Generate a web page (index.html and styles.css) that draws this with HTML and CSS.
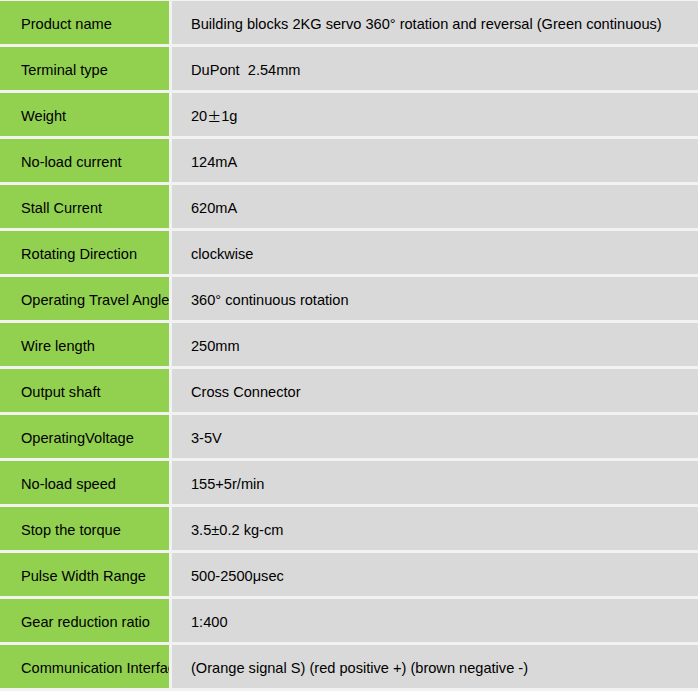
FILE: index.html
```html
<!DOCTYPE html>
<html>
<head>
<meta charset="utf-8">
<link rel="stylesheet" href="styles.css">
</head>
<body>
<div class="spec">
  <div class="k">Product name</div><div class="v">Building blocks 2KG servo 360° rotation and reversal (Green continuous)</div>
  <div class="k">Terminal type</div><div class="v">DuPont&nbsp; 2.54mm</div>
  <div class="k">Weight</div><div class="v">20<span class="cjk">±</span>1g</div>
  <div class="k">No-load current</div><div class="v">124mA</div>
  <div class="k">Stall Current</div><div class="v">620mA</div>
  <div class="k">Rotating Direction</div><div class="v">clockwise</div>
  <div class="k">Operating Travel Angle</div><div class="v">360° continuous rotation</div>
  <div class="k">Wire length</div><div class="v">250mm</div>
  <div class="k">Output shaft</div><div class="v">Cross Connector</div>
  <div class="k">OperatingVoltage</div><div class="v">3-5V</div>
  <div class="k">No-load speed</div><div class="v">155+5r/min</div>
  <div class="k">Stop the torque</div><div class="v">3.5±0.2 kg-cm</div>
  <div class="k">Pulse Width Range</div><div class="v">500-2500μsec</div>
  <div class="k">Gear reduction ratio</div><div class="v">1:400</div>
  <div class="k">Communication Interface</div><div class="v">(Orange signal S) (red positive +) (brown negative -)</div>
</div>
</body>
</html>
```
FILE: styles.css
```css
html, body {
  margin: 0;
  padding: 0;
  background: #f2f2f2;
}
.spec {
  display: grid;
  grid-template-columns: 169px 526px;
  grid-auto-rows: 43px;
  gap: 3px;
  padding: 1px 0 0 0;
  font-family: "Liberation Sans", Arial, sans-serif;
  font-size: 14.6px;
  color: #000;
}
.k, .v {
  display: flex;
  align-items: center;
  white-space: nowrap;
  overflow: hidden;
  padding-top: 2px;
  box-sizing: border-box;
}
.k {
  background: #92d050;
  padding-left: 21px;
}
.v {
  background: #d9d9d9;
  padding-left: 19px;
}
.cjk {
  font-family: "Noto Sans CJK SC", sans-serif;
  font-size: 14px;
}
```
